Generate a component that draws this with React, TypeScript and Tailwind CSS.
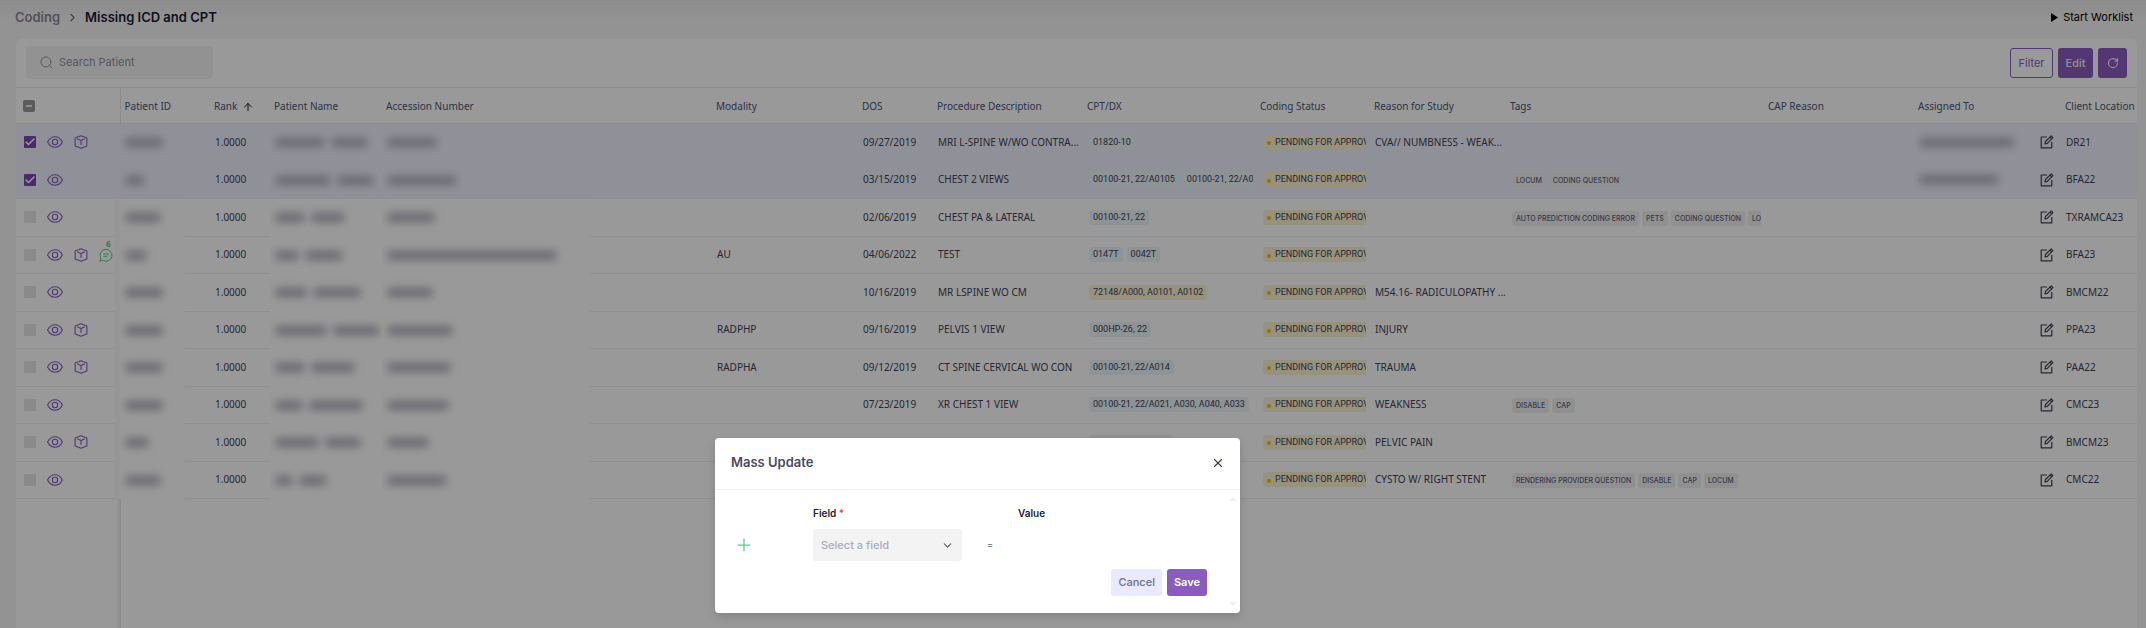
import React from "react";
import { Search, ChevronRight, ChevronDown, ArrowUp, X, Plus, RotateCw, Check } from "lucide-react";

type Tone = "blue" | "amber";

interface Row {
  selected?: boolean;
  study?: boolean;
  notes?: number;
  id: number;
  name: number[];
  accession: number;
  modality?: string;
  dos: string;
  procedure: string;
  codes: string[];
  tone?: Tone;
  reason?: string;
  tags?: string[];
  assigned?: number;
  location: string;
}

const rows: Row[] = [
  { selected: true, study: true, id: 36, name: [48, 35], accession: 48, dos: "09/27/2019", procedure: "MRI L-SPINE W/WO CONTRA...", codes: ["01820-10"], reason: "CVA// NUMBNESS - WEAK...", assigned: 94, location: "DR21" },
  { selected: true, id: 18, name: [54, 35], accession: 68, dos: "03/15/2019", procedure: "CHEST 2 VIEWS", codes: ["00100-21, 22/A0105", "00100-21, 22/A0105"], tags: ["LOCUM", "CODING QUESTION"], assigned: 78, location: "BFA22" },
  { id: 34, name: [28, 32], accession: 46, dos: "02/06/2019", procedure: "CHEST PA & LATERAL", codes: ["00100-21, 22"], tags: ["AUTO PREDICTION CODING ERROR", "PETS", "CODING QUESTION", "LOCUM"], location: "TXRAMCA23" },
  { study: true, notes: 6, id: 20, name: [22, 36], accession: 168, modality: "AU", dos: "04/06/2022", procedure: "TEST", codes: ["0147T", "0042T"], location: "BFA23" },
  { id: 36, name: [30, 46], accession: 44, dos: "10/16/2019", procedure: "MR LSPINE WO CM", codes: ["72148/A000, A0101, A0102"], tone: "amber", reason: "M54.16- RADICULOPATHY ...", location: "BMCM22" },
  { study: true, id: 36, name: [50, 44], accession: 64, modality: "RADPHP", dos: "09/16/2019", procedure: "PELVIS 1 VIEW", codes: ["000HP-26, 22"], reason: "INJURY", location: "PPA23" },
  { study: true, id: 36, name: [28, 42], accession: 62, modality: "RADPHA", dos: "09/12/2019", procedure: "CT SPINE CERVICAL WO CON", codes: ["00100-21, 22/A014"], reason: "TRAUMA", location: "PAA22" },
  { id: 36, name: [26, 52], accession: 60, dos: "07/23/2019", procedure: "XR CHEST 1 VIEW", codes: ["00100-21, 22/A021, A030, A040, A033", "00100"], reason: "WEAKNESS", tags: ["DISABLE", "CAP"], location: "CMC23" },
  { study: true, id: 22, name: [42, 34], accession: 40, dos: "", procedure: "", codes: ["00100-21, 22/A014"], reason: "PELVIC PAIN", location: "BMCM23" },
  { id: 34, name: [16, 26], accession: 58, dos: "", procedure: "", codes: [], reason: "CYSTO W/ RIGHT STENT", tags: ["RENDERING PROVIDER QUESTION", "DISABLE", "CAP", "LOCUM"], location: "CMC22" },
];

const chipTone: Record<Tone, string> = {
  blue: "bg-[#edf5fb]",
  amber: "bg-[#fcf3d2]",
};

function EyeIcon() {
  return (
    <svg width="16" height="12" viewBox="0 0 16 12" fill="none" stroke="#8a5cbe" strokeWidth="1.100">
      <path d="M.6 6C2.300 2.600 4.900.8 8 .8S13.700 2.600 15.400 6C13.700 9.400 11.100 11.200 8 11.200S2.300 9.400.6 6Z" />
      <circle cx="8" cy="6" r="2.700" />
    </svg>
  );
}

function BoxIcon() {
  return (
    <svg width="14" height="14" viewBox="0 0 14 14" fill="none" stroke="#8a5cbe" strokeWidth="1.100" strokeLinejoin="round" strokeLinecap="round">
      <path d="M7 .7 12.900 2.900v8L7 13.300 1.100 10.900v-8Z" />
      <path d="M3.600 3.900 7 5.500l3.400-1.600M7 5.500v4" />
    </svg>
  );
}

function NotesIcon({ count }: { count: number }) {
  return (
    <span className="relative block">
      <svg width="14" height="14" viewBox="0 0 14 14" fill="none" stroke="#50cd89" strokeLinecap="round" strokeLinejoin="round">
        <path d="M1 13 1.800 10.300A6 6 0 1 1 4 12.500Z" />
        <path d="M4.800 6h4.400M4.800 8.300h3" />
      </svg>
      <span className="absolute -top-[9px] left-[7px] text-[8px] leading-[9px] font-bold text-[#50cd89]">{count}</span>
    </span>
  );
}

function EditIcon() {
  return (
    <svg width="14" height="14" viewBox="0 0 14 14" fill="none" stroke="#3f4254" strokeWidth="1.200" strokeLinejoin="round">
      <path d="M7 2H1.200v10.800h10.600V7" />
      <path d="m5 8.900.5-2.400L11.200.9l1.700 1.700-5.600 5.700ZM10 2.200l1.700 1.700" />
    </svg>
  );
}

function Redacted({ widths }: { widths: number[] }) {
  return (
    <span className="flex gap-2 blur-[4px]" aria-hidden="true">
      {widths.map((width, i) => (
        <span key={i} className="h-[9px] bg-[#aeaebc]" style={{ width }} />
      ))}
    </span>
  );
}

function Cell({ short, plain, className = "", children }: { short: boolean; plain?: boolean; className?: string; children?: React.ReactNode }) {
  return (
    <div className={`flex items-center overflow-hidden pb-px whitespace-nowrap ${short ? "h-[37px]" : "h-[38px]"} ${plain ? "" : "border-b border-[#eff0f5]"} ${className}`}>
      {children}
    </div>
  );
}

function DataRow({ row, index }: { row: Row; index: number }) {
  const short = index % 2 === 1;
  const n = index + 1;
  return (
    <tr className={row.selected ? "bg-[#f1f2fd]" : "bg-white"}>
      <td className="p-0">
        <div className="flex">
          <Cell short={short} className="w-[99px] shrink-0 gap-[11px] pl-2">
            <label className="relative flex size-3 shrink-0">
              <input type="checkbox" defaultChecked={row.selected} aria-label={`Select row ${n}`} className="size-3 appearance-none bg-[#e6e6e6] checked:rounded-[1px] checked:bg-[#7a46b4]" />
              {row.selected && <Check className="absolute inset-0 size-3 text-white" strokeWidth={3} />}
            </label>
            <button type="button" aria-label={`View row ${n}`}><EyeIcon /></button>
            {row.study && <button type="button" aria-label={`Study ${n}`}><BoxIcon /></button>}
            {row.notes && <button type="button" aria-label={`Notes ${n}`}><NotesIcon count={row.notes} /></button>}
          </Cell>
          <Cell short={short} plain className={`flex-1 ${row.selected ? "bg-[#f2f0fa]" : "bg-[#fafafa]"}`} />
        </div>
      </td>
      <td className="p-0">
        <div className="flex">
          <Cell short={short} plain className="w-[65px] shrink-0 pl-[6px]"><Redacted widths={[row.id]} /></Cell>
          <Cell short={short} className="flex-1" />
        </div>
      </td>
      <td className="p-0"><Cell short={short} className="pl-[5px]">1.0000</Cell></td>
      <td className="p-0"><Cell short={short} plain className="pl-[6px]"><Redacted widths={row.name} /></Cell></td>
      <td className="p-0">
        <div className="flex">
          <Cell short={short} plain className="w-[208px] shrink-0 pl-[6px]"><Redacted widths={[row.accession]} /></Cell>
          <Cell short={short} className="flex-1" />
        </div>
      </td>
      <td className="p-0"><Cell short={short} className="pl-[5px]">{row.modality}</Cell></td>
      <td className="p-0"><Cell short={short} className="pl-[5px]">{row.dos}</Cell></td>
      <td className="p-0"><Cell short={short} className="pl-[5px]"><span>{row.procedure}</span></Cell></td>
      <td className="p-0">
        <Cell short={short}>
          <div className="mr-[3px] ml-[6px] flex flex-1 gap-1 overflow-hidden font-['Roboto',sans-serif] text-[9px]">
            {row.codes.map((code, i) => (
              <span key={i} className={`shrink-0 rounded-[4px] px-1 leading-[15px] ${chipTone[row.tone ?? "blue"]}`}>{code}</span>
            ))}
          </div>
        </Cell>
      </td>
      <td className="p-0">
        <Cell short={short}>
          <div className="mr-1 ml-[7px] flex flex-1 overflow-hidden font-['Roboto',sans-serif] text-[9px]">
            <span className="flex shrink-0 items-center gap-1 rounded-[4px] bg-[#fcf3d2] pr-1 pl-1 leading-[15px]">
              <span className="mt-[2px] size-1 rounded-full bg-[#f6c000]" />
              PENDING FOR APPROVAL
            </span>
          </div>
        </Cell>
      </td>
      <td className="p-0"><Cell short={short} className="pl-[5px]"><span>{row.reason}</span></Cell></td>
      <td className="p-0">
        <Cell short={short}>
          <div className="mt-[2px] mr-[3px] ml-[6px] flex flex-1 gap-[3px] overflow-hidden">
            {row.tags?.map((tag) => (
              <span key={tag} className={`shrink-0 rounded-[3px] px-1 font-['Inter',sans-serif] text-[7px] leading-[15px] font-medium text-[#5e6278] ${row.selected ? "bg-[#f1f1f6]" : "bg-[#f1f1f2]"}`}>{tag}</span>
            ))}
          </div>
        </Cell>
      </td>
      <td className="p-0"><Cell short={short} /></td>
      <td className="p-0">
        <Cell short={short} className="justify-between pr-[7px] pl-[6px]">
          {row.assigned ? <Redacted widths={[row.assigned]} /> : <span />}
          <button type="button" aria-label={`Edit assignee ${n}`}><EditIcon /></button>
        </Cell>
      </td>
      <td className="p-0"><Cell short={short} className="pl-[5px]">{row.location}</Cell></td>
    </tr>
  );
}

const headings = ["Patient ID", "Rank", "Patient Name", "Accession Number", "Modality", "DOS", "Procedure Description", "CPT/DX", "Coding Status", "Reason for Study", "Tags", "CAP Reason", "Assigned To", "Client Location ..."];

function Worklist() {
  return (
    <table className="w-full table-fixed border-collapse font-['Noto_Sans',sans-serif] text-[10px] text-[#3f4254]">
      <colgroup>
        <col className="w-[104px]" />
        <col className="w-[90px]" />
        <col className="w-[60px]" />
        <col className="w-[112px]" />
        <col />
        <col className="w-[146px]" />
        <col className="w-[75px]" />
        <col className="w-[150px]" />
        <col className="w-[173px]" />
        <col className="w-[114px]" />
        <col className="w-[136px]" />
        <col className="w-[258px]" />
        <col className="w-[150px]" />
        <col className="w-[147px]" />
        <col className="w-[76px]" />
      </colgroup>
      <thead>
        <tr className="h-9 border-y border-[#e9eaf2]">
          <th className="border-r border-[#e4e4ea] p-0 pl-[7px]">
            <label className="relative flex size-3">
              <input type="checkbox" aria-label="Select all rows" className="size-3 appearance-none rounded-[2px] bg-[#999]" />
              <span className="absolute inset-x-[3px] top-[5px] h-[2px] bg-[#ececec]" />
            </label>
          </th>
          {headings.map((heading) => (
            <th key={heading} className="overflow-hidden p-0 pt-[2px] pl-1 text-left font-normal whitespace-nowrap text-[#4b5675]">
              {heading === "Rank" ? (
                <span className="flex items-center gap-[5px]">Rank <ArrowUp className="size-3 text-[#181c32]" strokeWidth={2} /></span>
              ) : heading}
            </th>
          ))}
        </tr>
      </thead>
      <tbody>
        {rows.map((row, i) => <DataRow key={i} row={row} index={i} />)}
      </tbody>
    </table>
  );
}

function MassUpdate() {
  return (
    <div role="dialog" aria-label="Mass Update" className="absolute top-[438px] left-[715px] w-[525px] rounded-[4px] bg-white shadow-[0_4px_10px_rgba(0,0,0,0.15)]">
      <div className="flex h-[52px] items-center justify-between border-b border-[#eff0f2] pr-[15px] pb-px pl-4">
        <h2 className="text-[13px] font-semibold text-[#4a4b63]">Mass Update</h2>
        <button type="button" aria-label="Close"><X className="size-[14px] text-[#3f4254]" strokeWidth={2} /></button>
      </div>
      <div className="flex h-[123px]">
        <form className="flex flex-1 flex-col pt-4 pr-[18px] pl-[23px]">
          <div className="grid grid-cols-[75px_149px_56px_1fr] items-center">
            <span />
            <label htmlFor="field" className="text-[10px] leading-[15px] font-semibold text-[#181c32]">Field <span className="text-[#f1416c]">*</span></label>
            <span />
            <span className="text-[10px] leading-[15px] font-semibold text-[#181c32]">Value</span>
          </div>
          <div className="mt-2 grid grid-cols-[75px_149px_56px_1fr] items-center">
            <button type="button" aria-label="Add field" className="w-3"><Plus className="-m-1 size-5 text-[#50cd89]" strokeWidth={1.500} /></button>
            <span className="relative flex items-center">
              <select id="field" defaultValue="" className="h-8 w-full appearance-none rounded-[3px] bg-[#f3f3f3] px-2 text-[11px] font-medium text-[#a9abbe]">
                <option value="">Select a field</option>
              </select>
              <ChevronDown className="pointer-events-none absolute right-2 size-[13px] text-[#5e5e6c]" strokeWidth={2} />
            </span>
            <span className="pl-[25px] text-[9px] font-medium text-[#5e6278]">=</span>
            <span />
          </div>
          <div className="mt-2 flex justify-end gap-[5px] text-[11px]">
            <button type="button" className="h-[27px] rounded-[3px] bg-[#e9e9ff] px-[7px] font-medium text-[#6d6f85]">Cancel</button>
            <button type="submit" className="h-[27px] rounded-[3px] bg-[#8a5cbe] px-[7px] font-semibold text-white">Save</button>
          </div>
        </form>
        <div className="flex w-[15px] flex-col items-center justify-between pt-[7px] pb-[7px]" aria-hidden="true">
          <span className="border-x-4 border-b-4 border-x-transparent border-b-[#efefef]" />
          <span className="border-x-4 border-t-4 border-x-transparent border-t-[#efefef]" />
        </div>
      </div>
    </div>
  );
}

export default function App() {
  return (
    <div className="relative flex min-h-screen flex-col overflow-hidden bg-[#f5f5f5] font-['Inter',sans-serif]">
      <header className="flex h-[39px] items-center justify-between bg-linear-to-b from-[#e9e9e9] to-[#f5f5f5] to-50% pt-0 pr-[13px] pb-1 pl-[15px]">
        <nav aria-label="Breadcrumb" className="flex items-center gap-[6px] text-[13px] font-semibold">
          <a href="#coding" className="text-[#8c8698]">Coding</a>
          <ChevronRight className="size-[13px] text-[#6d6f7a]" strokeWidth={2} />
          <span className="text-[#181c32]">Missing ICD and CPT</span>
        </nav>
        <button type="button" className="flex items-center gap-[5px] text-[11px] text-black">
          <svg width="7" height="9" viewBox="0 0 7 9"><path d="M0 0 7 4.500 0 9Z" /></svg>
          Start Worklist
        </button>
      </header>
      <main className="mr-[9px] ml-4 flex flex-1 flex-col overflow-hidden rounded-t-[6px] bg-white">
        <div className="flex h-12 items-start justify-between px-[10px] pt-[7px]">
          <label className="flex h-[33px] w-[187px] items-center gap-[5px] rounded-[4px] bg-[#f3f3f4] pb-px pl-[13px]">
            <Search className="size-[15px] shrink-0 text-[#8f93a8]" strokeWidth={1.500} />
            <input type="text" placeholder="Search Patient" aria-label="Search Patient" className="w-full bg-transparent text-[11px] outline-none placeholder:text-[#9092a5]" />
          </label>
          <div className="mt-[2px] flex h-[30px] gap-[5px] text-[11px]">
            <button type="button" className="w-[43px] rounded-[3px] border border-[#8a5cbe] text-[#8a5cbe]">Filter</button>
            <button type="button" className="w-[35px] rounded-[3px] bg-[#8a5cbe] font-medium text-[#f1f1f5]">Edit</button>
            <button type="button" aria-label="Refresh" className="flex w-[29px] items-center justify-center rounded-[3px] bg-[#8a5cbe] text-[#f1f1f5]"><RotateCw className="size-3" strokeWidth={2.500} /></button>
          </div>
        </div>
        <Worklist />
        <div className="flex flex-1 pl-[100px]"><div className="w-[5px] bg-linear-to-r from-white to-[#e8e8e8]" /></div>
      </main>
      <div className="absolute inset-0 bg-black/40" />
      <MassUpdate />
    </div>
  );
}
